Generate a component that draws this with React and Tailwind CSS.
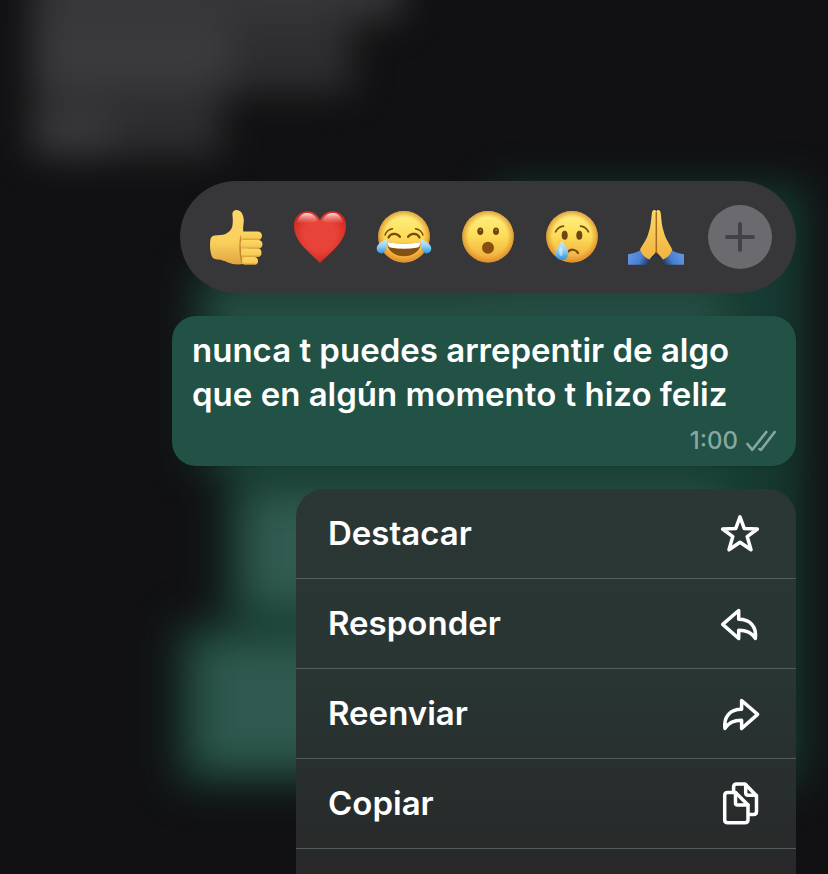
import React, { useState } from 'react';

const ThumbsUp = () => (
    <svg viewBox="0 0 64 64" className="size-16" aria-hidden="true">
        <defs>
            <linearGradient id="hand" x1="0" y1="0" x2="0" y2="1">
                <stop offset="0" stopColor="#fbd86a" />
                <stop offset="0.6" stopColor="#f9cf5c" />
                <stop offset="1" stopColor="#e0a440" />
            </linearGradient>
            <linearGradient id="finger" x1="0" y1="0" x2="0" y2="1">
                <stop offset="0" stopColor="#fcd965" />
                <stop offset="0.7" stopColor="#f7ca55" />
                <stop offset="1" stopColor="#d89c38" />
            </linearGradient>
        </defs>
        <path d="M28.400 10C28 6.800 30 4.900 33 5c2.600.2 4.300 1.700 5.300 4 1.500 3.300 1.800 6.400 1.200 10-.4 2.600-.5 5-.2 7.500L44 31v26l-5 2c-5 1-11 .3-15-1.500-4-1.700-7-2.800-10-3-3-.2-5.200-.5-6.300-3.500C6 46.500 5.800 41 6.200 36c.3-3.400 1.400-5.200 4.300-5.600 4-.5 8-.2 11-1.400 3.300-1.700 5.800-4.300 6.700-7.300.7-3 .8-7.700.2-11.700z" fill="url(#hand)" />
        <path d="M37 30c-1.200 8-1.500 18 1 28" stroke="#c4872a" strokeWidth="1.500" fill="none" />
        <rect x="36.500" y="26.500" width="21.500" height="8.700" rx="4.200" fill="url(#finger)" />
        <rect x="36.500" y="35" width="22" height="8.800" rx="4.200" fill="url(#finger)" />
        <rect x="37" y="43.600" width="20.500" height="8.500" rx="4.100" fill="url(#finger)" />
        <rect x="38" y="51.900" width="16" height="7.900" rx="3.900" fill="url(#finger)" />
    </svg>
);

const Heart = () => (
    <svg viewBox="0 0 64 64" className="size-16" aria-hidden="true">
        <defs>
            <radialGradient id="heart" cx="0.5" cy="0.45" r="0.62">
                <stop offset="0.5" stopColor="#e84338" />
                <stop offset="1" stopColor="#cb211e" />
            </radialGradient>
            <linearGradient id="heartShine" x1="0" y1="0" x2="0" y2="1">
                <stop offset="0" stopColor="#fff" stopOpacity="0.85" />
                <stop offset="1" stopColor="#f8a59c" stopOpacity="0" />
            </linearGradient>
        </defs>
        <path d="M32 58C24 49 6 38 6 21 6 12 12 6.300 19 6.300c6 0 10.500 3.200 13 9.200 2.500-6 7-9.200 13-9.200C52 6.300 58 12 58 21c0 17-18 28-26 37z" fill="url(#heart)" />
        <path d="M9 17.500C11 10.500 14.500 8 19 8c4.700 0 8.500 2.500 10.500 8-5 2-15 4-20.500 1.500zM55 17.500C53 10.500 49.500 8 45 8c-4.700 0-8.500 2.500-10.500 8 5 2 15 4 20.500 1.500z" fill="url(#heartShine)" />
    </svg>
);

const Face = ({ id, children }) => (
    <svg viewBox="0 0 64 64" className="size-16" aria-hidden="true">
        <defs>
            <linearGradient id={`${id}Skin`} x1="0" y1="0" x2="0" y2="1">
                <stop offset="0" stopColor="#fef385" />
                <stop offset="0.5" stopColor="#fcdc57" />
                <stop offset="1" stopColor="#f1a63c" />
            </linearGradient>
            <radialGradient id={`${id}Edge`}>
                <stop offset="0.75" stopColor="#e08a22" stopOpacity="0" />
                <stop offset="1" stopColor="#d98524" stopOpacity="0.75" />
            </radialGradient>
            <linearGradient id={`${id}Tear`} x1="0" y1="0" x2="0" y2="1">
                <stop offset="0" stopColor="#cdeefc" />
                <stop offset="0.5" stopColor="#8fd0f7" />
                <stop offset="1" stopColor="#2f92e0" />
            </linearGradient>
        </defs>
        <circle cx="32" cy="31.700" r="25.700" fill={`url(#${id}Skin)`} />
        <circle cx="32" cy="31.700" r="25.700" fill={`url(#${id}Edge)`} />
        {children}
    </svg>
);

const Joy = () => (
    <Face id="joy">
        <g fill="none" stroke="#7a4a12" strokeLinecap="round">
            <path d="M13 30c1-3 4-5.800 7.500-6.300M51 30c-1-3-4-5.800-7.500-6.300" strokeWidth="1.500" />
            <path d="M16.500 32.500c2-4.500 8.500-5 11.500-.6M47.500 32.500c-2-4.500-8.500-5-11.500-.6" strokeWidth="2.200" />
        </g>
        <path d="M15.300 37c11 2.200 22.400 2.200 33.400 0C49 46 41 51.200 32 51.200S15 46 15.300 37z" fill="#85500f" />
        <path d="M15.300 37c11 2.200 22.400 2.200 33.400 0-.1 3-1 4.700-3 5.400-9 1.700-18.400 1.700-27.400 0-2-.7-2.900-2.400-3-5.400z" fill="#fff" />
        <path d="M14.700 34.300c-4.700 2-10 5-10 9.200 0 3 2.200 5 4.900 4.900 4.800-.3 5.400-7.400 5.100-14.100zM49.300 34.300c4.700 2 10 5 10 9.200 0 3-2.200 5-4.900 4.900-4.800-.3-5.400-7.400-5.100-14.100z" fill="url(#joyTear)" />
    </Face>
);

const Surprised = () => (
    <Face id="surprised">
        <ellipse cx="24.300" cy="26.300" rx="3" ry="3.800" fill="#6e4410" />
        <ellipse cx="40" cy="26.300" rx="3" ry="3.800" fill="#6e4410" />
        <ellipse cx="32" cy="42.700" rx="6" ry="6" fill="#85500f" />
        <ellipse cx="24.500" cy="25" rx="1" ry="1" fill="#b07b35" />
        <ellipse cx="40.200" cy="25" rx="1" ry="1" fill="#b07b35" />
    </Face>
);

const Crying = () => (
    <Face id="crying">
        <ellipse cx="24.700" cy="30.300" rx="3" ry="4.500" fill="#6e4410" />
        <ellipse cx="39.300" cy="30.300" rx="3" ry="4.500" fill="#6e4410" />
        <g fill="none" stroke="#7a4a12" strokeLinecap="round">
            <path d="M15.500 26.800c1.700-3.200 4.600-5.400 8-5.700M48.500 26.800c-1.700-3.200-4.600-5.400-8-5.700" strokeWidth="1.700" />
            <path d="M28 46.700c2.700-3 7.800-2.600 10 1.300" strokeWidth="2.200" />
        </g>
        <path d="M21.800 35.800c2.500 4.500 6.500 8.500 6.500 13 0 3.700-2.700 6.200-6.300 6.200s-6.400-2.500-6.400-6.200c0-4.500 4.300-8.500 6.200-13z" fill="url(#cryingTear)" />
        <ellipse cx="21" cy="46.500" rx="1.800" ry="4.500" fill="#fff" opacity="0.450" />
    </Face>
);

const Pray = () => (
    <svg viewBox="0 0 64 64" className="size-16" aria-hidden="true">
        <defs>
            <linearGradient id="palm" x1="0" y1="0" x2="0" y2="1">
                <stop offset="0" stopColor="#fbdb69" />
                <stop offset="1" stopColor="#f3b13f" />
            </linearGradient>
            <linearGradient id="sleeveLeft" x1="0" y1="0" x2="1" y2="0.3">
                <stop offset="0" stopColor="#6a9ce6" />
                <stop offset="0.600" stopColor="#4a7fd0" />
                <stop offset="1" stopColor="#1c2d4a" />
            </linearGradient>
            <linearGradient id="sleeveRight" x1="1" y1="0" x2="0" y2="0.3">
                <stop offset="0" stopColor="#6a9ce6" />
                <stop offset="0.600" stopColor="#4a7fd0" />
                <stop offset="1" stopColor="#1c2d4a" />
            </linearGradient>
        </defs>
        <path d="M4 49.200c6-.6 10-2.200 14-5.200L31 50.500c-3 3-6 6-8.500 9.200H4z" fill="url(#sleeveLeft)" />
        <path d="M60 49.200c-6-.6-10-2.200-14-5.200L33 50.500c3 3 6 6 8.500 9.200H60z" fill="url(#sleeveRight)" />
        <path d="M32.300 6.500C31 4.200 28.500 4.600 28 7.500c-.8 5-.8 10-2 15-1.500 6-3 11-5.500 14.500-1.500 2.500-3.300 5-4.500 7.500 1.500 4.500 4.800 8.500 9.500 10 2-3.500 5-4.500 6.800-8.500z" fill="url(#palm)" />
        <path d="M32.300 6.500c1.300-2.300 3.800-1.900 4.300 1 .8 5 .8 10 2 15 1.500 6 3 11 5.500 14.500 1.300 2.500 3.100 5 4.100 7.500-1.300 4.500-4.600 8.500-9.300 10-2-3.500-4.800-4.500-6.600-8.500z" fill="url(#palm)" />
        <path d="M32.300 7v41" stroke="#a9691b" strokeWidth="1.500" />
    </svg>
);

const MenuIcon = ({ children }) => (
    <svg
        viewBox="-2 -2 44 44"
        className="size-11 shrink-0"
        fill="none"
        stroke="currentColor"
        strokeWidth="3.500"
        strokeLinecap="round"
        strokeLinejoin="round"
        aria-hidden="true"
    >
        {children}
    </svg>
);

const reactions = [
    { label: 'Me gusta', Icon: ThumbsUp },
    { label: 'Corazón', Icon: Heart },
    { label: 'Risa', Icon: Joy },
    { label: 'Sorpresa', Icon: Surprised },
    { label: 'Tristeza', Icon: Crying },
    { label: 'Gracias', Icon: Pray },
];

const actions = [
    {
        label: 'Destacar',
        icon: <path d="M20 2.800l4.300 11.800 13.100.4-10.200 7.600 3.800 13.100L20 28.200 9 35.700l3.800-13.100L2.600 15l13.100-.4z" />,
    },
    {
        label: 'Responder',
        icon: <path d="M18.700 6.500L2.700 20.400l16 14.100v-8.300c7.500 0 13 2 16.700 8.200C36.800 23 30.500 15.300 18.700 15.300z" />,
    },
    {
        label: 'Reenviar',
        icon: <path d="M21.600 6.500l16 13.900-16 14.100v-8.300c-7.500 0-13 2-16.700 8.200C3.500 23 9.800 15.300 21.600 15.300z" />,
    },
    {
        label: 'Copiar',
        icon: (
            <>
                <path d="M15.500 8.500H7.700C5.500 8.500 4.700 9.700 4.700 11.500v24.300c0 2 1 3 3 3h17c2.300 0 3.300-1 3.300-3V21z" />
                <path d="M15.500 8.500v10.500c0 1.400.8 2 2 2H28" />
                <path d="M13.600 8V3.200C13.600 1 14.700 0 16.700 0h8.300L36.500 11.800v15.700c0 2-1 3-3 3H29" />
                <path d="M25.700.5v8.500c0 1.600.9 2.300 2.300 2.300h8" />
            </>
        ),
    },
];

// Out of focus conversation behind the open message
const BlurredChat = () => (
    <div className="absolute inset-0 flex flex-col overflow-hidden" aria-hidden="true">
        <div className="-mt-16 flex flex-col pl-8 blur-[18px]">
            <div className="h-[84px] w-[370px] bg-[#363638]" />
            <div className="flex h-[72px]">
                <div className="w-[200px] bg-[#3a3a3c]" />
                <div className="w-[120px] bg-[#2e2e30]" />
            </div>
            <div className="h-5 w-[190px] bg-[#2c2c2e]" />
            <div className="flex h-11">
                <div className="w-[80px] bg-[#3a3a3c]" />
                <div className="w-[110px] bg-[#2e2e30]" />
            </div>
        </div>
        <div className="mt-8 flex flex-col items-end pr-6 blur-[20px]">
            <div className="h-20 w-[310px] bg-[#143d33]" />
            <div className="h-[200px] w-[610px] bg-[#163b32] py-4 pr-20 pl-5">
                <div className="h-full bg-[#264d43]" />
            </div>
            <div className="h-[156px] w-[580px] bg-[#15392f] pt-6 pr-20 pb-4 pl-5">
                <div className="h-full bg-[#315b50]" />
            </div>
            <div className="h-[160px] w-[628px] bg-[#15392f] py-4 pr-20 pl-5">
                <div className="h-full bg-[#2f594e]" />
            </div>
        </div>
    </div>
);

const App = () => {
    const [reaction, setReaction] = useState(null);

    return (
        <div className="relative h-screen overflow-hidden bg-[#111113] font-['Inter','Liberation_Sans',sans-serif] text-white">
            <BlurredChat />

            <main className="relative flex h-full flex-col items-end gap-[23px] pt-[181px] pr-8 pl-8">
                <div className="flex h-28 shrink-0 items-center gap-5 rounded-full bg-[#373638] px-6">
                    {reactions.map(({ label, Icon }) => (
                        <button
                            key={label}
                            type="button"
                            aria-label={label}
                            aria-pressed={reaction === label}
                            onClick={() => setReaction(label)}
                        >
                            <Icon />
                        </button>
                    ))}
                    <button
                        type="button"
                        aria-label="Más reacciones"
                        className="flex size-16 items-center justify-center rounded-full bg-[#6b6a6f] text-[#404246]"
                    >
                        <svg viewBox="0 0 32 32" className="size-8" stroke="currentColor" strokeWidth="3.800" strokeLinecap="round" aria-hidden="true">
                            <path d="M16 3v26M3 16h26" />
                        </svg>
                    </button>
                </div>

                <article className="w-full max-w-[624px] shrink-0 rounded-3xl bg-[#225146] px-5 pt-3 pb-2 shadow-sm">
                    <p className="text-[33px] leading-[44px] font-semibold">
                        nunca t puedes arrepentir de algo<br />
                        que en algún momento t hizo feliz
                    </p>
                    <div className="flex h-[42px] items-center justify-end gap-2 pt-2 text-[#86a8a0]">
                        <time className="text-2xl font-medium">1:00</time>
                        <svg viewBox="0 0 30 24" className="h-6 w-[30px]" fill="none" stroke="currentColor" strokeWidth="2.600" strokeLinecap="round" strokeLinejoin="round" aria-label="Entregado" role="img">
                            <path d="M1.500 15l4.800 5.800L20.300 3M13.500 20l1.600.8L28.700 3" />
                        </svg>
                    </div>
                </article>

                <ul className="flex min-h-0 w-full max-w-[500px] flex-1 flex-col overflow-hidden rounded-t-[28px] bg-linear-to-b from-[#2b3735] via-[#283533] to-[#282829]">
                    {actions.map(({ label, icon }) => (
                        <li key={label} className="shrink-0 border-b border-[#545d5b]">
                            <button type="button" className="flex h-[89px] w-full items-center justify-between pr-[34px] pl-8 text-left">
                                <span className="text-[33px] font-semibold">{label}</span>
                                <MenuIcon>{icon}</MenuIcon>
                            </button>
                        </li>
                    ))}
                </ul>
            </main>
        </div>
    );
};

export default App;
